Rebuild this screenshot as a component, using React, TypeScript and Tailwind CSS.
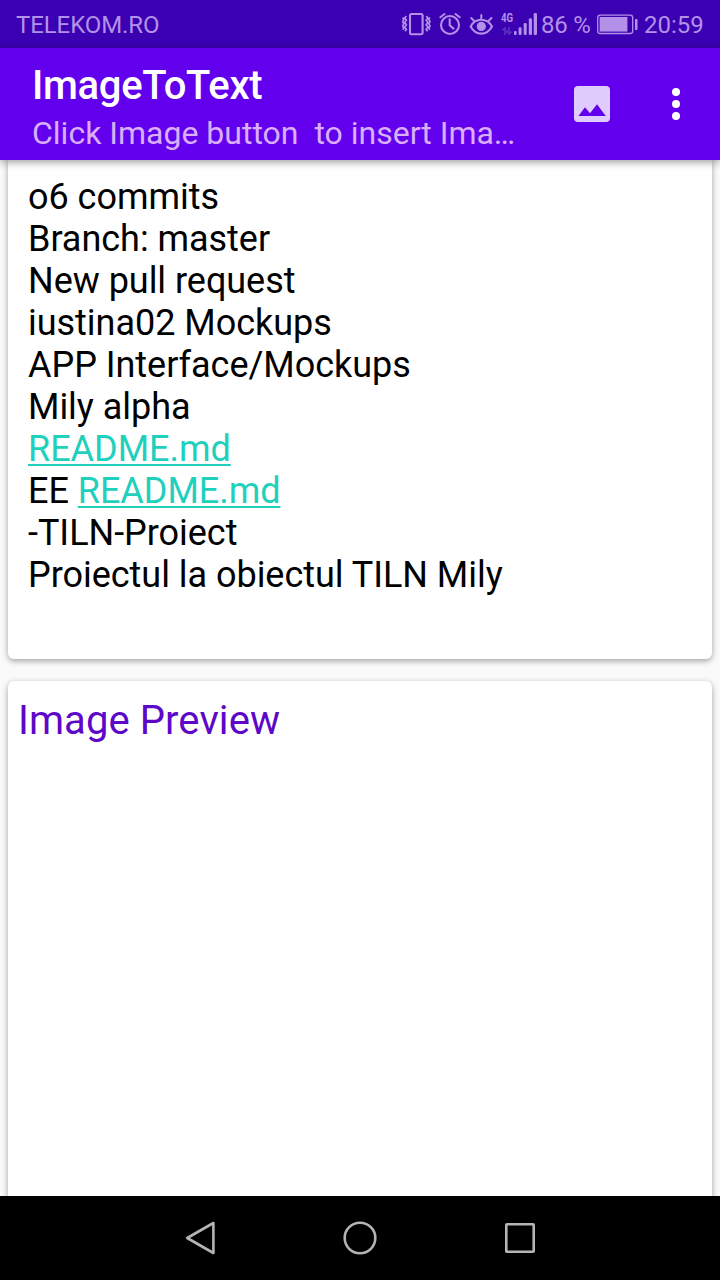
import type { ReactNode } from 'react';

const TINT = '#b391e8';

function VibrateIcon() {
  return (
    <svg className="mr-2 h-12 w-[29px] shrink-0" viewBox="403 0 29 48" fill="none" stroke={TINT}>
      <rect x="411" y="14" width="12.6" height="20.2" rx="1.6" strokeWidth="2.1" />
      <path d="M407.2 16l-1.4 1.9 1.6 2.3-1.6 2.3 1.6 2.3-1.6 2.3 1.6 2.3-1.4 1.9M403.8 17.500l1 1.900-1.200 2.200 1.200 2.200-1.200 2.200 1.200 2.200-1 1.500" strokeWidth="1.7" />
      <path d="M427.4 16l1.400 1.900-1.600 2.300 1.600 2.300-1.600 2.300 1.600 2.300-1.600 2.300 1.400 1.900M430.800 17.500l-1 1.900 1.200 2.200-1.200 2.200 1.200 2.200-1.200 2.200 1 1.500" strokeWidth="1.700" />
    </svg>
  );
}

function AlarmIcon() {
  return (
    <svg className="mr-2 h-12 w-[22px] shrink-0" viewBox="439.3 0 22 48" fill="none" stroke={TINT} strokeLinecap="round">
      <circle cx="450.3" cy="25" r="9" strokeWidth="2.1" />
      <path d="M450 19.2v6l3.8 3.4" strokeWidth="2.1" />
      <path d="M440.6 17.2l4.2-3.2M460 17.2l-4.2-3.2" strokeWidth="2" />
    </svg>
  );
}

function EyeIcon() {
  return (
    <svg className="mr-[7px] h-12 w-[25px] shrink-0" viewBox="469 0 25 48" fill="none" stroke={TINT} strokeLinecap="round">
      <path d="M470.6 26.4c2.6-4.7 6.5-6.7 10.7-6.7s8.1 2 10.7 6.7c-2.6 4.7-6.5 7.2-10.7 7.2s-8.1-2.5-10.7-7.2z" strokeWidth="2.1" strokeLinejoin="round" />
      <circle cx="481.3" cy="26.4" r="4.6" fill={TINT} stroke="none" />
      <path d="M481.3 15v4M471.2 18l3 3M491.500 18l-3 3" strokeWidth="2" />
    </svg>
  );
}

function SignalIcon() {
  return (
    <div className="mr-1 flex h-12 w-9 shrink-0">
      <div className="flex w-[13px] flex-col pt-3">
        <span className="block h-[11px] w-[18px] origin-left scale-x-[0.74] text-[13px] leading-[11px] font-bold">4G</span>
        <svg className="mt-1 h-2 w-3" viewBox="0 0 12 8" fill="none" stroke="#5c35bf" strokeWidth="1.5">
          <path d="M4 8V1L1.5 3.5M8 0v7l2.5-2.5M6 3v3" />
        </svg>
      </div>
      <svg className="h-12 w-[23px]" viewBox="514 0 23 48" fill={TINT}>
        <rect x="514" y="31" width="2.6" height="4" rx="1" />
        <rect x="518.6" y="27.3" width="3" height="7.7" rx="1.2" />
        <rect x="523.7" y="23" width="3" height="12" rx="1.2" />
        <rect x="528.8" y="18.2" width="3.2" height="16.8" rx="1.3" />
        <rect x="533.7" y="13" width="3.3" height="22" rx="1.3" />
      </svg>
    </div>
  );
}

function BatteryIcon() {
  return (
    <svg className="h-12 w-[41px] shrink-0" viewBox="597 0 41 48" fill="none">
      <rect x="597.7" y="15.2" width="35" height="18.3" rx="2.5" stroke={TINT} strokeWidth="1.3" />
      <rect x="599.6" y="17" width="27.8" height="14.6" fill={TINT} />
      <rect x="635" y="19" width="2.5" height="11" rx="0.8" fill={TINT} />
    </svg>
  );
}

function StatusBar() {
  return (
    <div className="flex h-12 shrink-0 items-center bg-[#3a00b2] pr-4 pl-4 text-[24px] leading-[48px] whitespace-nowrap text-[#b391e8]">
      <span className="mr-auto pt-[2px] tracking-[-0.1px]">TELEKOM.RO</span>
      <VibrateIcon />
      <AlarmIcon />
      <EyeIcon />
      <SignalIcon />
      <span className="w-14 pt-[2px] tracking-[-0.2px]">86 %</span>
      <BatteryIcon />
      <span className="w-[66px] pt-[2px] pl-[6px]">20:59</span>
    </div>
  );
}

function AppBar() {
  return (
    <header className="z-10 flex h-28 shrink-0 bg-[#6200ee] pl-8 shadow-[0_2px_8px_rgba(0,0,0,0.4)]">
      <div className="w-[542px] pt-[14px] whitespace-pre">
        <h1 className="text-[40px] leading-[47px] font-medium tracking-[-0.3px] text-white">ImageToText</h1>
        <p className="mt-[5px] text-[32px] leading-[38px] text-[#d9aefa]">Click Image button  to insert Ima…</p>
      </div>
      <svg className="mt-[38px] h-9 w-9 shrink-0" viewBox="3 3 18 18" fill="#e0ccfc">
        <path d="M5 3h14a2 2 0 0 1 2 2v14a2 2 0 0 1-2 2H5a2 2 0 0 1-2-2V5a2 2 0 0 1 2-2zm.2 15h13.7l-4.4-5.9-3.5 4.5-2.5-3.01z" fillRule="evenodd" />
      </svg>
      <svg className="mt-9 ml-[62px] h-10 w-2" viewBox="0 0 8 40" fill="#fff">
        <circle cx="4" cy="8" r="4" />
        <circle cx="4" cy="20" r="4" />
        <circle cx="4" cy="32" r="4" />
      </svg>
    </header>
  );
}

function Link({ children }: { children: ReactNode }) {
  return <a className="text-[#1fd0bd] underline decoration-2 underline-offset-[3px]">{children}</a>;
}

function ResultCard() {
  const before = ['o6 commits', 'Branch: master', 'New pull request', 'iustina02 Mockups', 'APP Interface/Mockups', 'Mily alpha'];
  const after = ['-TILN-Proiect', 'Proiectul la obiectul TILN Mily'];
  return (
    <section className="h-[499px] shrink-0 rounded-b-md bg-white px-5 pt-4 text-[36px] leading-[42px] tracking-[-0.03px] whitespace-nowrap text-black shadow-[0_2px_6px_rgba(0,0,0,0.36)]">
      {before.map((line) => <p key={line}>{line}</p>)}
      <p><Link>README.md</Link></p>
      <p>EE <Link>README.md</Link></p>
      {after.map((line) => <p key={line}>{line}</p>)}
    </section>
  );
}

function NavigationBar() {
  return (
    <nav className="z-10 flex h-[84px] shrink-0 items-center justify-center gap-[126px] bg-black">
      <svg className="h-9 w-8" viewBox="0 0 32 36" fill="none" stroke="#b4b4b4" strokeWidth="2.6" strokeLinejoin="round">
        <path d="M3.200 18L29.400 3v30z" />
      </svg>
      <svg className="h-9 w-9" viewBox="0 0 36 36" fill="none" stroke="#b4b4b4" strokeWidth="2.6">
        <circle cx="18" cy="18" r="15.3" />
      </svg>
      <svg className="h-9 w-8" viewBox="0 0 32 36" fill="none" stroke="#b4b4b4" strokeWidth="2.6" strokeLinejoin="round">
        <rect x="2.3" y="4.3" width="27.4" height="27.4" rx="0.5" />
      </svg>
    </nav>
  );
}

export default function App() {
  return (
    <div className="flex h-[1280px] w-[720px] flex-col overflow-hidden bg-[#fafafa] font-['Roboto',sans-serif]">
      <StatusBar />
      <AppBar />
      <main className="flex h-[1036px] shrink-0 flex-col gap-[22px] overflow-hidden px-2">
        <ResultCard />
        <section className="h-[560px] shrink-0 rounded-t-md bg-white pt-4 pl-[10px] shadow-[0_2px_6px_rgba(0,0,0,0.36)]">
          <h2 className="text-[40px] leading-[47px] tracking-[0.08px] text-[#5d08c9]">Image Preview</h2>
        </section>
      </main>
      <NavigationBar />
    </div>
  );
}
